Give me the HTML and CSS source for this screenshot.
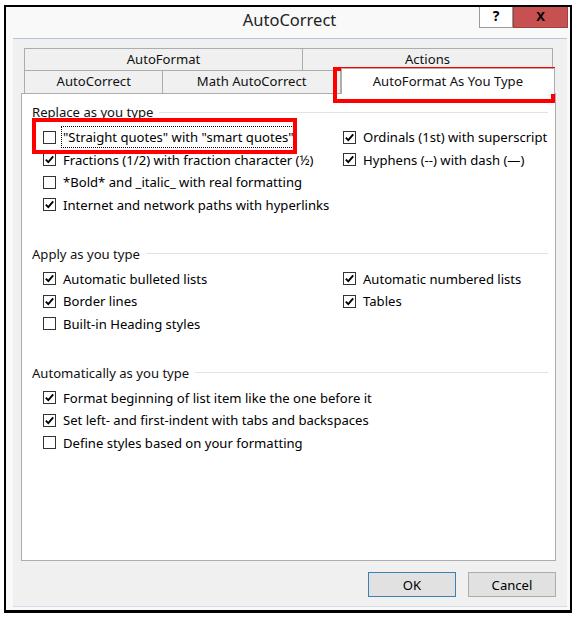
FILE: index.html
```html
<!DOCTYPE html>
<html lang="en">
<head>
  <meta charset="UTF-8" />
  <title>AutoCorrect</title>
  <link rel="stylesheet" href="styles.css">
</head>
<body>
  <div class="screen">
    <div class="window">
      <div class="titlebar">
        <div class="title">AutoCorrect</div>
        <div class="caption-btns">
          <div class="btn-help">?</div>
          <div class="btn-close">X</div>
        </div>
      </div>

      <div class="client">
        <div class="tabs">
          <div class="tab-row">
            <div class="tab tab-autoformat">AutoFormat</div>
            <div class="tab tab-actions">Actions</div>
          </div>
          <div class="tab-row">
            <div class="tab tab-autocorrect">AutoCorrect</div>
            <div class="tab tab-math">Math AutoCorrect</div>
            <div class="tab tab-selected">AutoFormat As You Type</div>
          </div>
        </div>

        <div class="panel">
          <div class="group">
            <div class="group-head"><span>Replace as you type</span></div>
            <div class="cols">
              <div class="col col-left">
                <div class="row"><span class="box"></span><span class="label focus">"Straight quotes" with "smart quotes"</span></div>
                <div class="row"><span class="box checked"><svg viewBox="0 0 11 11"><path d="M1.8 5.6 L4.3 8.1 L9.2 2.4"/></svg></span><span class="label">Fractions (1/2) with fraction character (½)</span></div>
                <div class="row"><span class="box"></span><span class="label">*Bold* and _italic_ with real formatting</span></div>
                <div class="row"><span class="box checked"><svg viewBox="0 0 11 11"><path d="M1.8 5.6 L4.3 8.1 L9.2 2.4"/></svg></span><span class="label">Internet and network paths with hyperlinks</span></div>
              </div>
              <div class="col">
                <div class="row"><span class="box checked"><svg viewBox="0 0 11 11"><path d="M1.8 5.6 L4.3 8.1 L9.2 2.4"/></svg></span><span class="label">Ordinals (1st) with superscript</span></div>
                <div class="row"><span class="box checked"><svg viewBox="0 0 11 11"><path d="M1.8 5.6 L4.3 8.1 L9.2 2.4"/></svg></span><span class="label">Hyphens (--) with dash (—)</span></div>
              </div>
            </div>
          </div>

          <div class="group">
            <div class="group-head"><span>Apply as you type</span></div>
            <div class="cols">
              <div class="col col-left">
                <div class="row"><span class="box checked"><svg viewBox="0 0 11 11"><path d="M1.8 5.6 L4.3 8.1 L9.2 2.4"/></svg></span><span class="label">Automatic bulleted lists</span></div>
                <div class="row"><span class="box checked"><svg viewBox="0 0 11 11"><path d="M1.8 5.6 L4.3 8.1 L9.2 2.4"/></svg></span><span class="label">Border lines</span></div>
                <div class="row"><span class="box"></span><span class="label">Built-in Heading styles</span></div>
              </div>
              <div class="col">
                <div class="row"><span class="box checked"><svg viewBox="0 0 11 11"><path d="M1.8 5.6 L4.3 8.1 L9.2 2.4"/></svg></span><span class="label">Automatic numbered lists</span></div>
                <div class="row"><span class="box checked"><svg viewBox="0 0 11 11"><path d="M1.8 5.6 L4.3 8.1 L9.2 2.4"/></svg></span><span class="label">Tables</span></div>
              </div>
            </div>
          </div>

          <div class="group">
            <div class="group-head"><span>Automatically as you type</span></div>
            <div class="cols">
              <div class="col col-left">
                <div class="row"><span class="box checked"><svg viewBox="0 0 11 11"><path d="M1.8 5.6 L4.3 8.1 L9.2 2.4"/></svg></span><span class="label">Format beginning of list item like the one before it</span></div>
                <div class="row"><span class="box checked"><svg viewBox="0 0 11 11"><path d="M1.8 5.6 L4.3 8.1 L9.2 2.4"/></svg></span><span class="label">Set left- and first-indent with tabs and backspaces</span></div>
                <div class="row"><span class="box"></span><span class="label">Define styles based on your formatting</span></div>
              </div>
            </div>
          </div>
        </div>

        <div class="buttons">
          <button class="btn btn-default">OK</button>
          <button class="btn">Cancel</button>
        </div>
      </div>
    </div>

    <div class="mark mark-tab"></div>
    <div class="mark mark-quotes"></div>
  </div>
</body>
</html>
```

FILE: styles.css
```css
* {
  box-sizing: border-box;
}
html, body {
  margin: 0;
  padding: 0;
  background: #ffffff;
  font-family: "Noto Sans", "Open Sans", sans-serif;
  font-size: 13.1px;
  color: #000;
}
.screen {
  position: relative;
  width: 579px;
  height: 620px;
  padding: 5px 0 0 4px;
}
.window {
  width: 568px;
  height: 608px;
  border: 2px solid #000;
  border-bottom-width: 3px;
  background: #f9f9f9;
  display: flex;
  flex-direction: column;
}
.titlebar {
  height: 31px;
  position: relative;
  display: flex;
  justify-content: center;
}
.title {
  font-size: 16.5px;
  line-height: 26px;
  color: #222;
  margin-left: 3px;
}
.caption-btns {
  position: absolute;
  top: 0;
  right: 2px;
  display: flex;
}
.btn-help {
  width: 34px;
  height: 21px;
  background: #fff;
  border: 1px solid #9a9a9a;
  border-top: none;
  text-align: center;
  font-weight: bold;
  font-size: 14px;
  line-height: 18px;
}
.btn-close {
  width: 55px;
  height: 21px;
  background: #c75050;
  border: 1px solid #a04040;
  border-top: none;
  text-align: center;
  font-weight: bold;
  font-size: 13px;
  line-height: 18px;
}
.client {
  flex: 1;
  margin: 0 3px 3px 7px;
  background: #f0f0f0;
  border-top: 1px solid #b6c6d8;
  border-bottom: 1px solid #d5dde8;
  padding: 9px 11px 0 8px;
  display: flex;
  flex-direction: column;
}
.tabs {
  margin-left: 3px;
  width: 529px;
}
.tab-row {
  display: flex;
  height: 22px;
}
.tab-row + .tab-row {
  height: 23px;
}
.tab {
  border: 1px solid #adadad;
  border-bottom: none;
  background: #f0f0f0;
  text-align: center;
  line-height: 21px;
  color: #111;
}
.tab + .tab {
  border-left: none;
}
.tab-autoformat { width: 279px; }
.tab-actions { width: 250px; }
.tab-autocorrect { width: 140px; }
.tab-math { width: 178px; }
.tab-selected {
  width: 215px;
  margin: -2px -2px 0 0;
  height: 26px;
  background: #fff;
  border-left: 1px solid #adadad !important;
  position: relative;
  z-index: 1;
  line-height: 24px;
}
.panel {
  height: 468px;
  background: #fff;
  border: 1px solid #adadad;
  padding: 10px 7px 0 10px;
}
.group + .group {
  margin-top: 29.5px;
}
.group-head {
  display: flex;
  align-items: center;
  height: 16px;
  line-height: 16px;
  color: #111;
  margin-bottom: 6px;
}
.group-head::after {
  content: '';
  flex: 1;
  border-top: 1px solid #dde3ea;
  margin-left: 6px;
}
.cols {
  display: flex;
  padding-left: 11px;
}
.col-left {
  width: 300px;
}
.row {
  display: flex;
  align-items: center;
  height: 22.5px;
}
.box {
  width: 13px;
  height: 13px;
  border: 1px solid #333;
  background: #fff;
  margin-right: 7px;
  flex: none;
}
.box svg {
  display: block;
  width: 11px;
  height: 11px;
}
.box svg path {
  fill: none;
  stroke: #000;
  stroke-width: 1.9;
}
.label {
  white-space: nowrap;
}
.focus {
  outline: 1px dotted #000;
  outline-offset: 1px;
}
.buttons {
  display: flex;
  justify-content: flex-end;
  gap: 12px;
  margin-top: 11px;
}
.btn {
  width: 88px;
  height: 25px;
  background: #e1e1e1;
  border: 1px solid #adadad;
  font-family: inherit;
  font-size: 13.1px;
  color: #000;
  padding: 0;
}
.btn-default {
  border-color: #3c7fb1;
}
.mark {
  position: absolute;
  border: 4px solid #f00;
}
.mark-tab {
  left: 333px;
  top: 67px;
  width: 222px;
  height: 36px;
}
.mark-quotes {
  left: 32px;
  top: 118px;
  width: 265px;
  height: 36px;
}
```
